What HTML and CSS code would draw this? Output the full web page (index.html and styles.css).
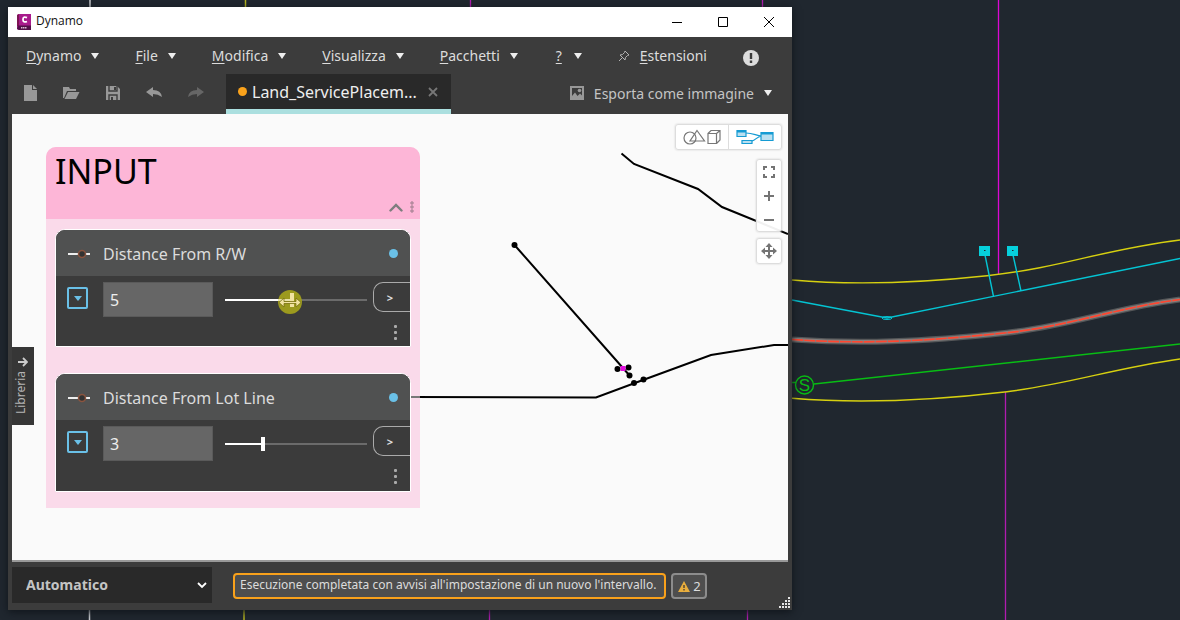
FILE: index.html
```html
<!DOCTYPE html>
<html lang="it">
<head>
<meta charset="utf-8">
<title>Dynamo</title>
<link rel="stylesheet" href="styles.css">
</head>
<body>
<main class="desktop">
  <svg class="drawing" viewBox="0 0 1180 620" preserveAspectRatio="xMinYMin slice" fill="none" aria-hidden="true">
    <path d="M90 0V8M89.500 608V620" stroke="#c9ccd0" stroke-width="1.500"/>
    <path d="M245.500 0V8M244 608V620" stroke="#b5b520" stroke-width="1.500"/>
    <path d="M470.500 0V8M762.500 0V8M489.500 608V620M747.500 608V620M1005.500 392V620" stroke="#b01cb0" stroke-width="1.300"/>
    <path d="M998.500 0V274" stroke="#dc08d4" stroke-width="1.300"/>
    <path d="M792 280C850 285 910 284 987 275.700S1100 250 1180 240M792 398.300C850 403 920 402 1007 391.700C1070 384 1115 368 1180 359" stroke="#d6d010" stroke-width="1.400"/>
    <path d="M792 339.500C860 344 920 342 1007 332.700C1070 326 1115 308 1180 299.500" stroke="#555759" stroke-width="6"/>
    <path d="M792 339.500C860 344 920 342 1007 332.700C1070 326 1115 308 1180 299.500" stroke="#84807f" stroke-width="3.500"/>
    <path d="M792 339.500C860 344 920 342 1007 332.700C1070 326 1115 308 1180 299.500" stroke="#ff4630" stroke-width="1.700" stroke-dasharray="11 1"/>
    <path d="M792 300L887 318L1180 258.500M985 255L993.500 296.500M1013 255L1021 291" stroke="#04c4d3" stroke-width="1.400"/>
    <path d="M979 246h11v10h-11zM1007 246h11v10h-11z" fill="#06d0dc"/>
    <path d="M984 250.500h1.500M1012 250.500h1.500" stroke="#20272f"/>
    <ellipse cx="887" cy="318" rx="5" ry="1.500" stroke="#04c4d3"/>
    <path d="M792 382.500H796M814 384L1180 344" stroke="#08bd14" stroke-width="1.400"/>
    <circle cx="804.500" cy="385" r="9" stroke="#08bd14" stroke-width="1.400"/>
    <text class="manhole" x="804.500" y="391" text-anchor="middle">S</text>
  </svg>

  <section class="window">
    <header class="titlebar">
      <svg width="16" height="17" viewBox="0 0 16 17" aria-hidden="true"><path d="M1 1L3 0H15V16H3L1 15Z" fill="#a81b8c"/><path d="M1 1L3 0V12H1Z" fill="#7d1553"/><path d="M2 11.500H15V16H3L1 15Z" fill="#531049"/><path d="M11 3.700Q7 2 7 5.500T11 7.500" fill="none" stroke="#fff" stroke-width="1.800"/><path d="M5 13.800H11" stroke="#d9bdd4" stroke-width="1.500" stroke-dasharray="1.500 .5"/></svg>
      <h1>Dynamo</h1>
      <div class="winbtns">
        <button aria-label="Riduci a icona"><svg width="12" height="12"><path d="M1 6.500H11"/></svg></button>
        <button aria-label="Ingrandisci"><svg width="12" height="12"><path d="M1.500 1.500H10.500V10.500H1.500Z"/></svg></button>
        <button aria-label="Chiudi"><svg width="12" height="12"><path d="M1 1L11 11M11 1L1 11"/></svg></button>
      </div>
    </header>

    <nav class="menubar">
      <button class="menu"><span><u>D</u>ynamo</span><i class="caret"></i></button>
      <button class="menu"><span><u>F</u>ile</span><i class="caret"></i></button>
      <button class="menu"><span><u>M</u>odifica</span><i class="caret"></i></button>
      <button class="menu"><span><u>V</u>isualizza</span><i class="caret"></i></button>
      <button class="menu"><span><u>P</u>acchetti</span><i class="caret"></i></button>
      <button class="menu"><span><u>?</u></span><i class="caret"></i></button>
      <button class="menu"><svg width="12" height="12" viewBox="0 0 12 12" fill="none" stroke="#b4b4b4"><path d="M7 1L11 5L9.500 5.500L7.500 7.500L7 10L2 5L4.500 4.500L6.500 2.500ZM4.500 7.500L1 11"/></svg><span><u>E</u>stensioni</span></button>
      <button class="notice" aria-label="Notifiche"><svg width="16" height="16" viewBox="0 0 16 16"><circle cx="8" cy="8" r="8" fill="#dcdcdc"/><path d="M8 3V9M8 10.500V13" stroke="#3c3c3c" stroke-width="2.400"/></svg></button>
    </nav>

    <div class="toolbar">
      <div class="tools">
        <button aria-label="Nuovo"><svg width="16" height="16" viewBox="0 0 16 16"><path d="M2 0H10V5H15V16H2Z" fill="#989898"/><path d="M11 0L15 4H11Z" fill="#989898"/></svg></button>
        <button aria-label="Apri"><svg width="17" height="16" viewBox="0 0 17 16"><path d="M0 13V2H6L7 4H13V6H4L1 13Z" fill="#989898"/><path d="M5 7H16.500L13 14H1.500Z" fill="#989898"/></svg></button>
        <button aria-label="Salva"><svg width="16" height="16" viewBox="0 0 16 16"><path d="M1 1H12L15 4V15H1Z" fill="#989898"/><path d="M4 1V6H12V1M4 15V10H12V15" fill="none" stroke="#3c3c3c" stroke-width="1.400"/><path d="M9 2h2v3h-2zM6 12h2v3h-2z" fill="#3c3c3c"/></svg></button>
        <button aria-label="Annulla"><svg width="17" height="16" viewBox="0 0 17 16"><path d="M0 7L7 2V5Q15 5 16 12Q12 9 7 9V12Z" fill="#989898"/></svg></button>
        <button aria-label="Ripeti" disabled><svg width="17" height="16" viewBox="0 0 17 16"><path d="M16 7L9 2V5Q1 5 0 12Q4 9 9 9V12Z" fill="#666"/></svg></button>
      </div>
      <div class="tab">
        <i class="dirty"></i><span class="tabname">Land_ServicePlacem...</span>
        <button aria-label="Chiudi scheda"><svg width="10" height="10" viewBox="0 0 10 10"><path d="M1 1L9 9M9 1L1 9" stroke="#777" stroke-width="1.800"/></svg></button>
      </div>
      <button class="export"><svg width="14" height="14" viewBox="0 0 14 14"><path d="M0 0H14V14H0Z" fill="#989898"/><path d="M2 2H12V9.500L10 7.500L7.500 10L5 6.500L2 10Z" fill="#3c3c3c"/><circle cx="9.500" cy="4.500" r="1.800" fill="#989898"/></svg><span>Esporta come immagine</span><i class="caret"></i></button>
    </div>

    <div class="canvas">
      <svg class="geometry" width="776" height="446" fill="none" aria-hidden="true">
        <g transform="translate(-12 -114)">
          <path d="M621.500 153.500L634 164L698 189L722 207L788 234M514.500 245L630 376M411 397L596 397.500L643 380L711 355L774 345H788" stroke="#000" stroke-width="2"/>
          <g fill="#000"><circle cx="514.500" cy="245" r="3"/><circle cx="617.500" cy="369" r="3"/><circle cx="628.500" cy="367.500" r="3"/><circle cx="629.500" cy="375.500" r="3"/><circle cx="634" cy="383" r="3"/><circle cx="643.500" cy="379.500" r="3"/></g>
          <path d="M620.500 366h5v5h-5z" fill="#e40be0"/>
        </g>
      </svg>

      <section class="group">
        <header class="grouphead">
          <h2>INPUT</h2>
          <div class="groupbtns">
            <button aria-label="Comprimi gruppo"><svg width="14" height="9" viewBox="0 0 14 9"><path d="M1.500 7.500L7 2L12.500 7.500" fill="none" stroke="#7d7d7d" stroke-width="2.400" stroke-linecap="round"/></svg></button>
            <button aria-label="Menu gruppo"><svg width="4" height="12" viewBox="0 0 4 12" fill="none" stroke="#7d6a73" stroke-width=".8"><circle cx="2" cy="2" r="1.200"/><circle cx="2" cy="6" r="1.200"/><circle cx="2" cy="10" r="1.200"/></svg></button>
          </div>
        </header>
        <div class="nodes">
          <article class="node">
            <header class="nodehead">
              <svg width="22" height="10" viewBox="0 0 22 10"><path d="M0 5H22" stroke="#eee" stroke-width="2"/><circle cx="14" cy="5" r="3.500" fill="#333" stroke="#8a543f" stroke-width="1.500"/></svg>
              <h3>Distance From R/W</h3><i class="state"></i>
            </header>
            <div class="nodebody">
              <button class="expand" aria-label="Impostazioni intervallo"><i></i></button>
              <input class="value" type="text" value="5" aria-label="Distance From R/W">
              <div class="sliderbox">
                <input class="slider slider-a" type="range" min="0" max="100" value="47" aria-label="Cursore Distance From R/W">
                <svg class="pointer" width="24" height="24" viewBox="0 0 24 24" aria-hidden="true"><circle cx="12" cy="12" r="12" fill="#9c9a1e"/><path d="M0 10H12" stroke="#e9e2a8" stroke-width="2"/><path d="M12 3H16V17H12Z" fill="#f1e3a2"/><path d="M1 12.500L6 8V11.500H18V8L23 12.500L18 17V13.500H6V17Z" fill="#f1e3a2" stroke="#77700f" stroke-width=".8"/></svg>
              </div>
              <button class="port">&gt;</button>
            </div>
            <button class="more" aria-label="Menu nodo"><i></i><i></i><i></i></button>
          </article>
          <article class="node">
            <header class="nodehead">
              <svg width="22" height="10" viewBox="0 0 22 10"><path d="M0 5H22" stroke="#eee" stroke-width="2"/><circle cx="14" cy="5" r="3.500" fill="#333" stroke="#8a543f" stroke-width="1.500"/></svg>
              <h3>Distance From Lot Line</h3><i class="state"></i>
            </header>
            <div class="nodebody">
              <button class="expand" aria-label="Impostazioni intervallo"><i></i></button>
              <input class="value" type="text" value="3" aria-label="Distance From Lot Line">
              <div class="sliderbox">
                <input class="slider slider-b" type="range" min="0" max="100" value="26" aria-label="Cursore Distance From Lot Line">
              </div>
              <button class="port">&gt;</button>
            </div>
            <button class="more" aria-label="Menu nodo"><i></i><i></i><i></i></button>
          </article>
        </div>
      </section>
      <svg class="overlap" width="9" height="2" aria-hidden="true"><path d="M0 1H9" stroke="#777" stroke-width="2"/></svg>

      <button class="library"><svg width="10" height="10" viewBox="0 0 10 10"><path d="M0 5H9M5 1L9 5L5 9" fill="none" stroke="#ccc" stroke-width="1.800"/></svg><span>Libreria</span></button>

      <div class="viewtools">
        <div class="modes">
          <button aria-label="Vista geometria"><svg width="38" height="16" viewBox="0 0 38 16" fill="none" stroke="#777" stroke-width="1.200"><circle cx="7" cy="9" r="6"/><path d="M14 1.500L21.500 12H7ZM25 4.500H33.500V14.500H25ZM25 4.500L28 1.500H37V11L33.500 14.500M33.500 4.500L37 1.500"/></svg></button>
          <button aria-label="Vista grafico"><svg width="38" height="16" viewBox="0 0 38 16" fill="#b9dff0" stroke="#159bd3" stroke-width="1.200"><path d="M10 4C18 4 20 7 26 7C20 8 20 11 16 12" fill="none"/><path d="M1 1.500h9v6h-9zM6 11.500h10v3h-10zM25 3.500h12v8h-12z"/><path d="M1 2.500H10M25 4.500H37" stroke-width="2"/></svg></button>
        </div>
        <div class="zoombox">
          <button aria-label="Adatta alla finestra"><svg width="12" height="12" viewBox="0 0 12 12"><path d="M1 4V1H4M8 1H11V4M11 8V11H8M4 11H1V8"/></svg></button>
          <button aria-label="Zoom avanti"><svg width="12" height="12" viewBox="0 0 12 12"><path d="M1 6H11M6 1V11"/></svg></button>
          <button aria-label="Zoom indietro"><svg width="12" height="12" viewBox="0 0 12 12"><path d="M1 6H11"/></svg></button>
        </div>
        <button class="pan" aria-label="Panoramica"><svg width="16" height="16" viewBox="0 0 16 16"><path d="M8 2V14M2 8H14" stroke-width="1.600"/><path d="M8 0L11.500 4H4.500ZM8 16L11.500 12H4.500ZM0 8L4 4.500V11.500ZM16 8L12 4.500V11.500Z" class="solid"/></svg></button>
      </div>
    </div>

    <footer class="status">
      <div class="runmode">
        <select aria-label="Modalità di esecuzione"><option>Automatico</option></select>
        <svg width="10" height="7" viewBox="0 0 10 7" aria-hidden="true"><path d="M1 1L5 5L9 1" fill="none" stroke="#fff" stroke-width="1.800"/></svg>
      </div>
      <output class="message">Esecuzione completata con avvisi all'impostazione di un nuovo l'intervallo.</output>
      <button class="warnings"><svg width="12" height="11" viewBox="0 0 12 11"><path d="M6 0L12 11H0Z" fill="#e9ae3d"/><path d="M6 4V7M6 8V9.500" stroke="#4b4033" stroke-width="1.400"/></svg><span>2</span></button>
      <svg class="grip" width="11" height="11" viewBox="0 0 11 11" aria-hidden="true"><path d="M9 0h2v2h-2zM6 3h2v2h-2zM9 3h2v2h-2zM3 6h2v2h-2zM6 6h2v2h-2zM9 6h2v2h-2zM0 9h2v2h-2zM3 9h2v2h-2zM6 9h2v2h-2zM9 9h2v2h-2z" fill="#e6e6e6"/></svg>
    </footer>
  </section>
</main>
</body>
</html>
```

FILE: styles.css
```css
* { box-sizing: border-box; }
body { margin: 0; background: #20272f; font-family: "Noto Sans", "Open Sans", sans-serif; color: #dcdcdc; }
button { margin: 0; padding: 0; border: 0; background: none; color: inherit; font: inherit; display: flex; align-items: center; justify-content: center; }
h1, h2, h3 { margin: 0; font-weight: 400; }
svg { display: block; flex: none; }

.desktop { position: relative; min-height: 100vh; overflow: hidden; }
.drawing { position: absolute; inset: 0; width: 100%; height: 100%; }
.manhole { fill: #08bd14; font: 17px "Liberation Sans", sans-serif; }

/* Dynamo window */
.window { position: absolute; inset: 7px 388px 10px 8px; display: flex; flex-direction: column; background: #3c3c3c; box-shadow: 0 2px 8px #10151b; }
.titlebar { display: flex; align-items: center; gap: 4px; height: 30px; padding-left: 8px; background: #fff; color: #111; }
.titlebar h1 { font: 12px/28px "Open Sans", sans-serif; height: 30px; }
.winbtns { display: flex; margin-left: auto; }
.winbtns button { width: 46px; height: 30px; }
.winbtns path { fill: none; stroke: #000; stroke-width: 1; }

.menubar { display: flex; align-items: center; gap: 36px; height: 37px; padding-left: 18px; font-size: 14px; }
.menu { gap: 10px; }
.menu span { min-width: 10px; }
.menu u { text-underline-offset: 2px; }
.caret { border: 4px solid transparent; border-top: 6px solid #eee; border-bottom: 0; }
.notice { margin-top: 4px; }

.toolbar { display: flex; height: 40px; }
.tools { display: flex; align-items: center; gap: 25px; width: 218px; height: 38px; padding-left: 14px; }
.tab { display: flex; align-items: center; gap: 5px; width: 225px; padding: 0 13px 0 12px; background: #292929; border-bottom: 5px solid #abdfdf; font-size: 16px; color: #eee; }
.dirty { width: 9px; height: 9px; border-radius: 50%; background: #faa21b; }
.tabname { flex: 1; white-space: nowrap; }
.export { gap: 10px; height: 38px; margin-left: auto; padding-right: 20px; font-size: 14px; color: #c4c4c4; }

/* workspace */
.canvas { position: relative; flex: 1; margin: 0 4px; background: #fafafa; border-bottom: 2px solid #999; overflow: hidden; }
.geometry { position: absolute; left: 0; top: 0; }
.overlap { position: absolute; left: 399px; top: 282px; }
.group { position: absolute; left: 34px; top: 33px; width: 374px; background: #fadaea; border-radius: 10px 10px 0 0; }
.grouphead { height: 72px; padding: 0 6px 0 9px; background: #fdb6d7; border-radius: 10px 10px 0 0; display: flex; justify-content: space-between; color: #000; }
.grouphead h2 { font: 34px/48px "Noto Sans", sans-serif; }
.groupbtns { display: flex; align-items: center; align-self: flex-end; gap: 7px; height: 24px; }
.nodes { display: flex; flex-direction: column; gap: 26px; padding: 10px 9px 16px; }
.node { height: 118px; background: #3b3b3b; border: 1px solid #fff; border-radius: 10px 10px 0 0; display: flex; flex-direction: column; }
.node + .node { height: 119px; }
.nodehead { display: flex; align-items: center; gap: 13px; height: 46px; padding: 1px 12px 0; background: #505151; border-radius: 9px 9px 0 0; }
.nodehead h3 { flex: 1; font-size: 16px; }
.state { width: 9px; height: 9px; border-radius: 50%; background: #6ac0e7; }
.nodebody { display: flex; align-items: flex-start; padding: 6px 0 0 11px; height: 46px; }
.expand { width: 21px; height: 22px; margin: 5px 15px 0 0; border: 2px solid #6ac0e7; border-radius: 2px; }
.expand i { border: 4px solid transparent; border-top: 5px solid #6ac0e7; border-bottom: 0; }
.value { width: 110px; height: 35px; padding: 0 6px; border: 1px solid #5a5a5a; background: #666; color: #eee; font: 16px "Noto Sans", sans-serif; }
.sliderbox { position: relative; flex: 1; height: 36px; margin: 0 6px 0 12px; display: flex; align-items: center; }
.slider { appearance: none; width: 100%; height: 14px; margin: 0; background: linear-gradient(#fff, #fff) left center / 46% 2px no-repeat, linear-gradient(#6b6b6b, #6b6b6b) center / 100% 2px no-repeat; }
.slider-b { background-size: 26% 2px, 100% 2px; }
.slider::-webkit-slider-thumb { appearance: none; width: 4px; height: 14px; background: #fff; }
.pointer { position: absolute; left: 53px; top: 8px; }
.port { width: 37px; height: 30px; padding-right: 4px; border: 1px solid #aaa; border-right: 0; border-radius: 10px 0 0 10px; font: 700 11px "Noto Sans", sans-serif; }
.more { flex-direction: column; gap: 3px; align-self: flex-end; width: 30px; height: 20px; }
.more i { width: 3px; height: 3px; background: #aaa; border-radius: 1px; }

.library { position: absolute; left: 0; top: 233px; width: 22px; height: 78px; flex-direction: column; gap: 4px; background: #363636; font-size: 12px; color: #b4b4b4; }
.library span { writing-mode: vertical-rl; rotate: 180deg; line-height: 16px; margin-right: 5px; }

.viewtools { position: absolute; top: 10px; right: 6px; display: flex; flex-direction: column; align-items: flex-end; }
.modes, .zoombox, .pan { background: #fffffff0; border: 1px solid #ddd; border-radius: 3px; box-shadow: 0 0 2px #ccc; }
.modes { display: flex; height: 26px; }
.modes button { width: 52px; }
.modes button + button { width: 53px; border-left: 1px solid #ddd; }
.zoombox { width: 26px; margin: 9px 0 6px; }
.zoombox button { width: 24px; height: 24px; }
.zoombox button:last-child { height: 23px; }
.zoombox path, .pan path { fill: none; stroke: #747474; stroke-width: 2; }
.pan { width: 26px; height: 26px; }
.pan .solid { fill: #747474; stroke: none; }

/* run bar */
.status { display: flex; align-items: center; height: 48px; padding: 0 2px 0 4px; }
.runmode { position: relative; width: 200px; height: 38px; }
.runmode select { appearance: none; width: 100%; height: 36px; padding: 0 14px 2px; border: 0; border-radius: 0; background: #292929; color: #c4c4c4; font: 700 14px "Noto Sans", sans-serif; }
.runmode svg { position: absolute; right: 5px; top: 15px; }
.message { margin: 0 5px 0 21px; padding: 0 8px 0 5px; height: 26px; line-height: 20px; border: 2px solid #f9a11b; border-radius: 4px; background: #4e4e4e; font-size: 12px; white-space: nowrap; }
.warnings { gap: 3px; width: 36px; height: 26px; border: 2px solid #8c8c8c; border-radius: 4px; background: #4e4e4e; font-size: 13px; }
.grip { align-self: flex-end; margin: 0 0 2px auto; }
```
